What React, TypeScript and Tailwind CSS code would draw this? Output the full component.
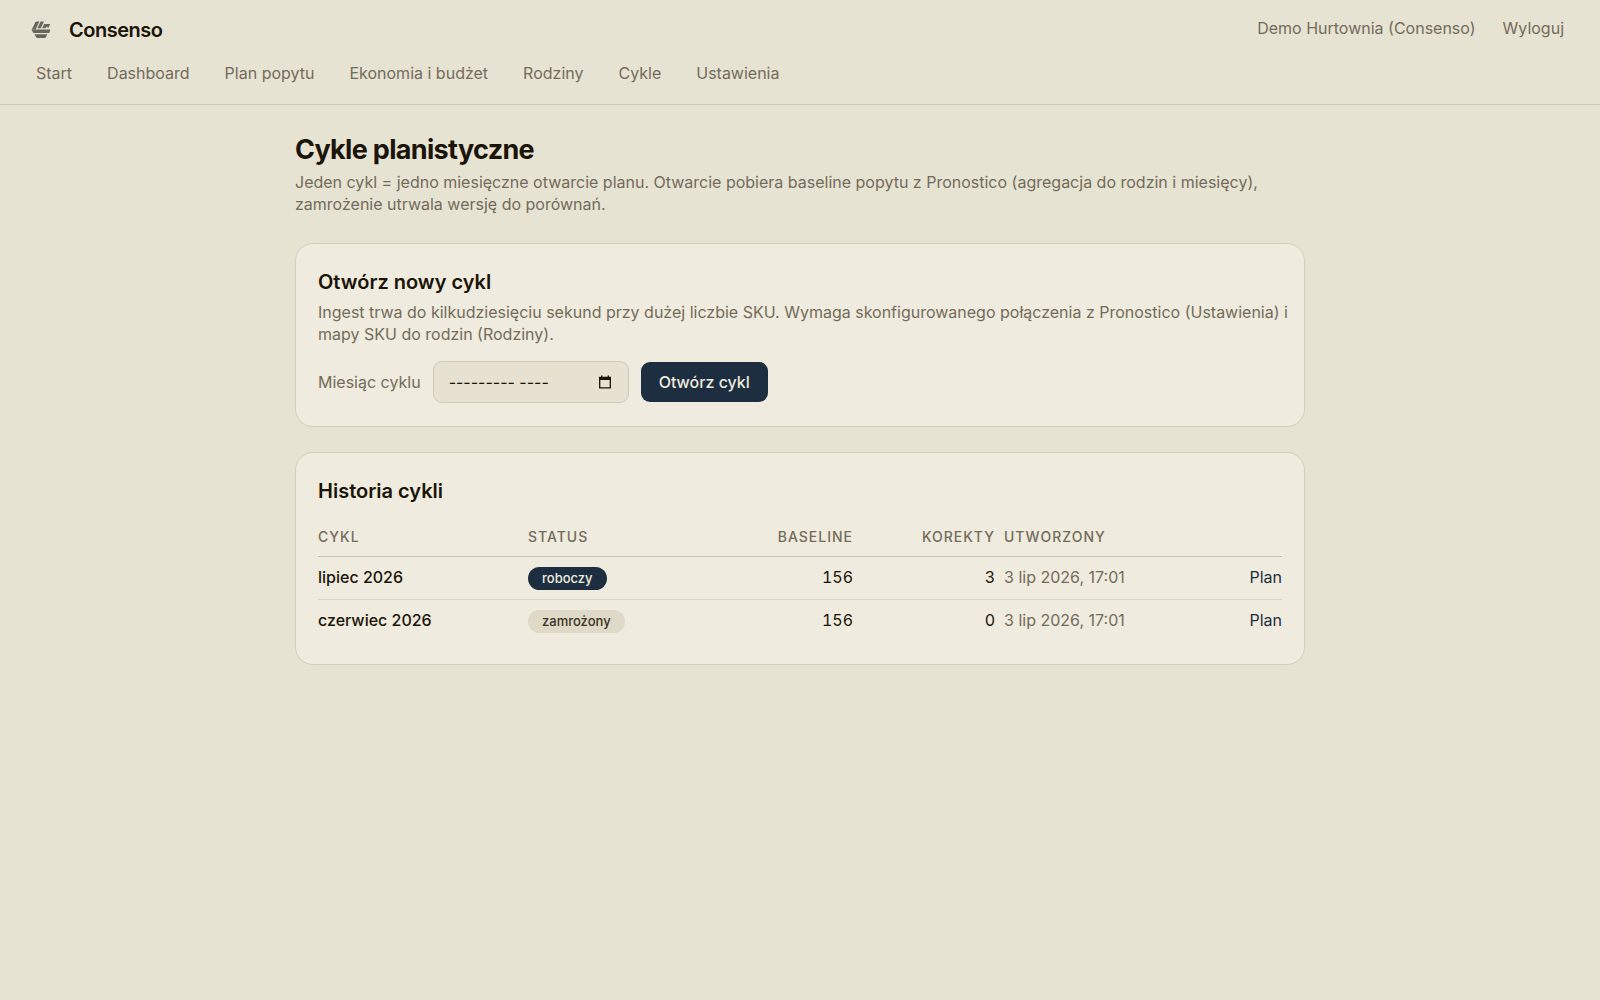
import { useState } from 'react'

type Cycle = {
  id: string
  month: string
  status: 'roboczy' | 'zamrożony'
  baseline: number
  corrections: number
  createdAt: string
}

const NAV = ['Start', 'Dashboard', 'Plan popytu', 'Ekonomia i budżet', 'Rodziny', 'Cykle', 'Ustawienia']

const CYCLES: Cycle[] = [
  { id: '2026-07', month: 'lipiec 2026', status: 'roboczy', baseline: 156, corrections: 3, createdAt: '3 lip 2026, 17:01' },
  { id: '2026-06', month: 'czerwiec 2026', status: 'zamrożony', baseline: 156, corrections: 0, createdAt: '3 lip 2026, 17:01' },
]

function Logo() {
  return (
    <svg viewBox="0 0 20 20" className="size-5" fill="#66665f" aria-hidden="true">
      <path d="M.8 9.6 4.2 2.6Q4.7 1.6 5.8 1.6H8.4L4.6 9.6Z" />
      <path d="M6.4 8.2 9.6 1.6H13L9.8 8.2Z" />
      <path d="M11.2 8.2 13.2 4H19.2L17.2 8.2 15.8 6.4 14.4 8.2Z" />
      <path d="M.4 9.4H19.4L18.2 13H2.4Z" />
      <path d="M3.4 14.2H16.4L14.4 18H5.8Z" />
    </svg>
  )
}

function CalendarIcon() {
  return (
    <svg viewBox="0 0 14 14" className="size-[14px]" aria-hidden="true">
      <path d="M1.7 2.5H12.3V12.8H1.7Z" fill="none" stroke="#1a1409" strokeWidth="1.3" />
      <path d="M1 2H13V5H1ZM3 .6H4.4V2H3ZM9.6 .6H11V2H9.6Z" fill="#1a1409" />
    </svg>
  )
}

function StatusBadge({ status }: { status: Cycle['status'] }) {
  return (
    <span
      className={`inline-flex items-center rounded-full px-[14px] py-[2px] align-middle text-[13px] leading-[19px] font-medium ${
        status === 'roboczy' ? 'bg-[#1e2e41] text-[#efebde]' : 'bg-[#dfd9c7] text-[#3a3324]'
      }`}
    >
      {status}
    </span>
  )
}

export default function App() {
  const [month, setMonth] = useState('')

  return (
    <div className="min-h-screen bg-[#e7e3d3] font-['Inter',sans-serif] text-[16px] leading-[22px] text-[#1a1409]">
      <header className="border-b border-[#cfcab8] pt-[14px] pb-5">
        <div className="flex items-start justify-between pr-9 pl-[31px]">
          <a href="#" className="flex items-center gap-[18px] text-[20px] leading-8 font-semibold tracking-tight">
            <Logo />
            Consenso
          </a>
          <div className="flex items-center gap-[27px] pt-[3px] text-[#736b5b]">
            <span>Demo Hurtownia (Consenso)</span>
            <button type="button">Wyloguj</button>
          </div>
        </div>
        <nav className="mt-4 flex flex-wrap gap-[35px] px-9 text-[#736b5b]">
          {NAV.map((item) => (
            <a key={item} href="#">{item}</a>
          ))}
        </nav>
      </header>

      <main className="mx-auto max-w-[1010px] pt-[27px]">
        <h1 className="text-[27px] leading-9 font-bold tracking-tight">Cykle planistyczne</h1>
        <p className="mt-[3px] text-[#736b5b]">
          Jeden cykl = jedno miesięczne otwarcie planu. Otwarcie pobiera baseline popytu z Pronostico (agregacja do
          rodzin i miesięcy), zamrożenie utrwala wersję do porównań.
        </p>

        {/* Nowy cykl */}
        <section className="mt-7 rounded-[18px] border border-[#d3cebc] bg-[#efebde] px-[22px] pt-6 pb-[23px]">
          <h2 className="text-[20px] leading-7 font-semibold">Otwórz nowy cykl</h2>
          <p className="mt-[5px] -mr-2 text-[#736b5b]">
            Ingest trwa do kilkudziesięciu sekund przy dużej liczbie SKU. Wymaga skonfigurowanego połączenia z
            Pronostico (Ustawienia) i mapy SKU do rodzin (Rodziny).
          </p>
          <form className="mt-4 flex flex-wrap items-center gap-3" onSubmit={(e) => e.preventDefault()}>
            <label htmlFor="month" className="text-[#736b5b]">Miesiąc cyklu</label>
            <div className="relative">
              <input
                id="month"
                type="text"
                placeholder="--------- ----"
                value={month}
                onChange={(e) => setMonth(e.target.value)}
                className="h-[42px] w-[196px] rounded-[9px] border border-[#d0cbb9] bg-[#e7e1d2] pr-10 pl-[15px] placeholder:text-[#1a1409]"
              />
              <button type="button" aria-label="Wybierz miesiąc" className="absolute inset-y-0 right-[17px]">
                <CalendarIcon />
              </button>
            </div>
            <button type="submit" className="h-10 rounded-[9px] bg-[#1e2e41] px-[18px] font-medium text-[#efebde]">
              Otwórz cykl
            </button>
          </form>
        </section>

        {/* Historia */}
        <section className="mt-[25px] rounded-[18px] border border-[#d3cebc] bg-[#efebde] px-[22px] pt-6 pb-[22px]">
          <h2 className="text-[20px] leading-7 font-semibold">Historia cykli</h2>
          <table className="mt-[13px] w-full table-fixed">
            <thead>
              <tr className="border-b border-[#c9c4b2] text-left text-[14px] leading-5 tracking-[1px] text-[#736b5b] uppercase">
                <th className="w-[210px] py-[9px] pr-[9px] font-medium">Cykl</th>
                <th className="w-[170px] py-[9px] pr-[9px] font-medium">Status</th>
                <th className="w-[164px] py-[9px] pr-[9px] text-right font-medium">Baseline</th>
                <th className="w-[142px] py-[9px] pr-[9px] text-right font-medium">Korekty</th>
                <th className="w-[190px] py-[9px] pr-[9px] font-medium">Utworzony</th>
                <td />
              </tr>
            </thead>
            <tbody>
              {CYCLES.map((c) => (
                <tr key={c.id} className="border-b border-[#d9d4c3] align-top last:border-0">
                  <td className="py-[9px] pr-[9px] font-medium">{c.month}</td>
                  <td className="py-[9px] pr-[9px]"><StatusBadge status={c.status} /></td>
                  <td className="py-[9px] pr-[9px] text-right tabular-nums">{c.baseline}</td>
                  <td className="py-[9px] pr-[9px] text-right tabular-nums">{c.corrections}</td>
                  <td className="py-[9px] pr-[9px] text-[#736b5b]">{c.createdAt}</td>
                  <td className="py-[9px] text-right">
                    <a href="#" className="text-[#1e2e41]">Plan</a>
                  </td>
                </tr>
              ))}
            </tbody>
          </table>
        </section>
      </main>
    </div>
  )
}
